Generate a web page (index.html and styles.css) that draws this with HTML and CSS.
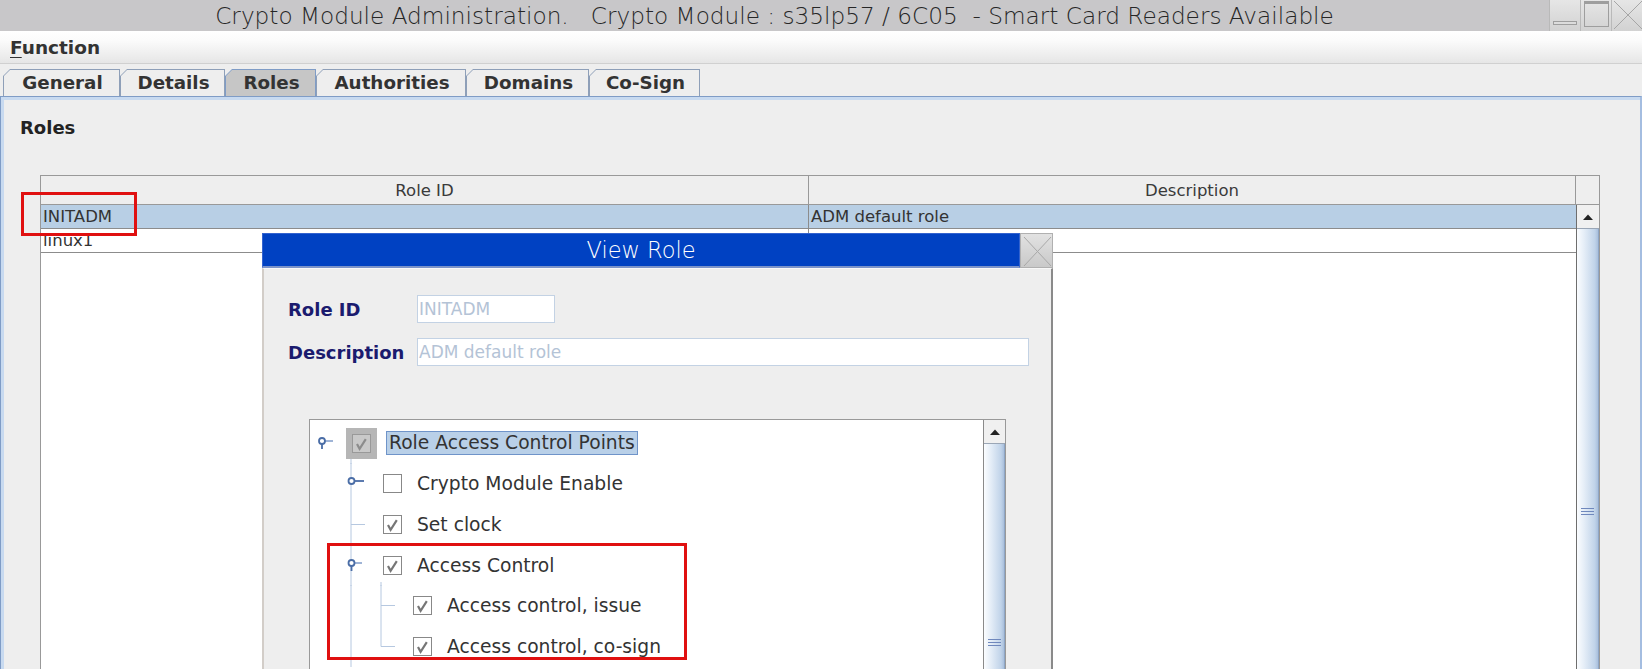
FILE: index.html
```html
<!DOCTYPE html>
<html>
<head>
<meta charset="utf-8">
<link rel="stylesheet" href="styles.css">
</head>
<body>
<div class="titlebar">
  <div class="title">Crypto Module Administration.   Crypto Module : s35lp57 / 6C05  - Smart Card Readers Available</div>
  <div class="wbtns">
    <span class="wbtn"><svg width="31" height="31"><rect x="3.5" y="21.5" width="23" height="3" fill="#dcdcdc" stroke="#9e9e9e"/></svg></span>
    <span class="wbtn"><svg width="31" height="31"><rect x="3.5" y="1.5" width="24" height="25" fill="none" stroke="#9e9e9e"/><line x1="3.5" y1="3" x2="27.5" y2="3" stroke="#9e9e9e" stroke-width="2"/></svg></span>
    <span class="wbtn"><svg width="31" height="31"><line x1="2" y1="1" x2="30" y2="29" stroke="#a6a6a6"/><line x1="30" y1="1" x2="2" y2="29" stroke="#a6a6a6"/></svg></span>
  </div>
</div>
<div class="menubar"><span class="menu"><span class="mn">F</span>unction</span></div>
<div class="tabrow">
  <div class="tab t-general"><span class="tab-in">General</span></div>
  <div class="tab t-details"><span class="tab-in">Details</span></div>
  <div class="tab t-roles sel"><span class="tab-in">Roles</span></div>
  <div class="tab t-auth"><span class="tab-in">Authorities</span></div>
  <div class="tab t-domains"><span class="tab-in">Domains</span></div>
  <div class="tab t-cosign"><span class="tab-in">Co-Sign</span></div>
</div>
<div class="panel">
  <div class="section-title">Roles</div>
  <div class="table">
    <div class="thead">
      <div class="th c1">Role ID</div>
      <div class="th c2">Description</div>
      <div class="th corner"></div>
    </div>
    <div class="tbody">
      <div class="rows">
        <div class="tr sel"><div class="td c1">INITADM</div><div class="td c2">ADM default role</div></div>
        <div class="tr"><div class="td c1">linux1</div><div class="td c2"></div></div>
      </div>
      <div class="vscroll">
        <div class="sbtn"><svg width="12" height="8"><path d="M1 7 L6 1.5 L11 7 Z" fill="#222"/></svg></div>
        <div class="thumb big"><svg width="13" height="7"><line x1="0" y1="0.5" x2="13" y2="0.5" stroke="#6f88bd"/><line x1="0" y1="3.5" x2="13" y2="3.5" stroke="#6f88bd"/><line x1="0" y1="6.5" x2="13" y2="6.5" stroke="#6f88bd"/></svg></div>
      </div>
    </div>
  </div>
</div>

<div class="dialog">
  <div class="dtitle">
    <div class="dtitle-text">View Role</div>
    <div class="dclose"><svg width="33" height="35"><line x1="3" y1="3" x2="30" y2="32" stroke="#a8a8a8"/><line x1="30" y1="3" x2="3" y2="32" stroke="#a8a8a8"/></svg></div>
  </div>
  <div class="dbody">
    <div class="form">
      <div class="flabel">Role ID</div>
      <div class="field f1">INITADM</div>
      <div class="flabel">Description</div>
      <div class="field f2">ADM default role</div>
    </div>
    <div class="tree">
      <div class="tree-rows">
        <div class="trow">
          <svg class="guide" width="36" height="41"><line x1="41" y1="36" x2="41" y2="41" stroke="#b6c8e0"/><line x1="15" y1="18" x2="23" y2="18" stroke="#7f9bc8" stroke-width="1.5"/><line x1="12" y1="21" x2="12" y2="26" stroke="#4a6da6" stroke-width="1.8"/><circle cx="12" cy="18" r="3" fill="#fff" stroke="#4a6da6" stroke-width="1.8"/></svg>
          <div class="grayck"><svg width="19" height="19"><rect x="0.5" y="0.5" width="18" height="18" fill="#c9c9c9" stroke="#999"/><path d="M5 10 L7.6 14.8 L13.8 5.2" fill="none" stroke="#8c8c8c" stroke-width="2.2"/></svg></div>
          <span class="tlabel root">Role Access Control Points</span>
        </div>
        <div class="trow">
          <svg class="guide" width="73" height="41"><line x1="41" y1="0" x2="41" y2="41" stroke="#b6c8e0"/><line x1="44" y1="18" x2="54" y2="18" stroke="#4a6da6" stroke-width="1.8"/><circle cx="41.5" cy="18" r="3" fill="#fff" stroke="#4a6da6" stroke-width="1.8"/></svg>
          <svg class="ck" width="19" height="19"><rect x="0.5" y="0.5" width="18" height="18" fill="#fff" stroke="#888"/></svg>
          <span class="tlabel">Crypto Module Enable</span>
        </div>
        <div class="trow">
          <svg class="guide" width="73" height="41"><line x1="41" y1="0" x2="41" y2="41" stroke="#b6c8e0"/><line x1="41" y1="20.5" x2="55" y2="20.5" stroke="#b6c8e0"/></svg>
          <svg class="ck" width="19" height="19"><rect x="0.5" y="0.5" width="18" height="18" fill="#fff" stroke="#888"/><path d="M5 10 L7.6 14.8 L13.8 5.2" fill="none" stroke="#767676" stroke-width="2.2"/></svg>
          <span class="tlabel">Set clock</span>
        </div>
        <div class="trow">
          <svg class="guide" width="73" height="41"><line x1="41" y1="0" x2="41" y2="41" stroke="#b6c8e0"/><line x1="71" y1="37" x2="71" y2="41" stroke="#b6c8e0"/><line x1="44" y1="18" x2="52" y2="18" stroke="#7f9bc8" stroke-width="1.5"/><line x1="41.5" y1="21" x2="41.5" y2="26" stroke="#4a6da6" stroke-width="1.8"/><circle cx="41.5" cy="18" r="3" fill="#fff" stroke="#4a6da6" stroke-width="1.8"/></svg>
          <svg class="ck" width="19" height="19"><rect x="0.5" y="0.5" width="18" height="18" fill="#fff" stroke="#888"/><path d="M5 10 L7.6 14.8 L13.8 5.2" fill="none" stroke="#767676" stroke-width="2.2"/></svg>
          <span class="tlabel">Access Control</span>
        </div>
        <div class="trow">
          <svg class="guide" width="103" height="41"><line x1="41" y1="0" x2="41" y2="41" stroke="#b6c8e0"/><line x1="71" y1="0" x2="71" y2="41" stroke="#b6c8e0"/><line x1="71" y1="20.5" x2="85" y2="20.5" stroke="#b6c8e0"/></svg>
          <svg class="ck" width="19" height="19"><rect x="0.5" y="0.5" width="18" height="18" fill="#fff" stroke="#888"/><path d="M5 10 L7.6 14.8 L13.8 5.2" fill="none" stroke="#767676" stroke-width="2.2"/></svg>
          <span class="tlabel">Access control, issue</span>
        </div>
        <div class="trow">
          <svg class="guide" width="103" height="41"><line x1="41" y1="0" x2="41" y2="41" stroke="#b6c8e0"/><line x1="71" y1="0" x2="71" y2="20.5" stroke="#b6c8e0"/><line x1="71" y1="20.5" x2="85" y2="20.5" stroke="#b6c8e0"/></svg>
          <svg class="ck" width="19" height="19"><rect x="0.5" y="0.5" width="18" height="18" fill="#fff" stroke="#888"/><path d="M5 10 L7.6 14.8 L13.8 5.2" fill="none" stroke="#767676" stroke-width="2.2"/></svg>
          <span class="tlabel">Access control, co-sign</span>
        </div>
      </div>
      <div class="vscroll small">
        <div class="sbtn"><svg width="12" height="8"><path d="M1 7 L6 1.5 L11 7 Z" fill="#222"/></svg></div>
        <div class="thumb tree-thumb"><svg width="13" height="7"><line x1="0" y1="0.5" x2="13" y2="0.5" stroke="#6f88bd"/><line x1="0" y1="3.5" x2="13" y2="3.5" stroke="#6f88bd"/><line x1="0" y1="6.5" x2="13" y2="6.5" stroke="#6f88bd"/></svg></div>
      </div>
    </div>
  </div>
</div>

<div class="redbox r1"></div>
<div class="redbox r2"></div>
</body>
</html>
```

FILE: styles.css
```css
* { box-sizing: border-box; }
html, body { margin: 0; padding: 0; }
body {
  width: 1642px;
  height: 669px;
  overflow: hidden;
  position: relative;
  background: #eeeeee;
  font-family: "DejaVu Sans", "Liberation Sans", sans-serif;
  color: #333333;
  display: flex;
  flex-direction: column;
}

/* window title bar */
.titlebar {
  height: 31px;
  flex: none;
  display: flex;
  align-items: center;
  background: #c8c7c9;
}
.title {
  flex: 1;
  text-align: center;
  white-space: pre;
  font-size: 23.2px;
  font-weight: 200;
  color: #262626;
  line-height: 31px;
}
.wbtns { display: flex; height: 31px; }
.wbtn {
  width: 31px;
  height: 31px;
  display: block;
  background: linear-gradient(#e6e6e6, #d2d2d2);
  border-left: 1px solid #b9b9b9;
}
.wbtn svg { display: block; }

/* menu bar */
.menubar {
  height: 33px;
  flex: none;
  background: linear-gradient(#ffffff, #fbfbfb 30%, #e6e6e6);
  border-bottom: 1px solid #d0d0d0;
  display: flex;
  align-items: center;
  padding-left: 10px;
}
.menu { font-size: 18.5px; font-weight: bold; color: #333; }
.mn { text-decoration: underline; text-underline-offset: 3px; text-decoration-thickness: 1px; }

/* tabs */
.tabrow {
  height: 32px;
  flex: none;
  display: flex;
  align-items: flex-end;
  padding-left: 3px;
}
.tab {
  height: 27px;
  padding: 1px 1px 0 1px;
  background: #8e9fb8;
  clip-path: polygon(7px 0, 100% 0, 100% 100%, 0 100%, 0 7px);
}
.t-general { width: 117px; }
.t-details { width: 105px; }
.t-roles { width: 91px; }
.t-auth { width: 150px; }
.t-domains { width: 123px; }
.t-cosign { width: 111px; }
.tab-in {
  display: block;
  height: 100%;
  padding-left: 2px;
  text-align: center;
  background: #eeeeee;
  clip-path: polygon(6px 0, 100% 0, 100% 100%, 0 100%, 0 6px);
  font-size: 18.3px;
  font-weight: bold;
  line-height: 25px;
  color: #333;
  white-space: nowrap;
}
.tab.sel { background: #7f9cc6; }
.tab.sel .tab-in { background: #c6c6c6; }

/* main panel */
.panel {
  flex: 1;
  min-height: 0;
  border-top: 1px solid #7f9cc6;
  border-left: 1px solid #7f9cc6;
  border-right: 2px solid #a4bde0;
  box-shadow: inset 3px 3px 0 #c8daf0;
  padding: 19px 0 0 19px;
  background: #eeeeee;
  overflow: hidden;
}
.section-title {
  font-size: 18px;
  font-weight: bold;
  line-height: 24px;
  color: #222;
}
.table {
  margin: 35px 0 0 20px;
  width: 1560px;
  height: 494px;
  border: 1px solid #999;
  border-bottom: none;
  background: #ffffff;
  display: flex;
  flex-direction: column;
  overflow: hidden;
}
.thead {
  height: 29px;
  flex: none;
  display: flex;
  background: #eeeeee;
  border-bottom: 1px solid #999;
}
.th {
  display: flex;
  align-items: center;
  justify-content: center;
  font-size: 16.5px;
  color: #3a3a3a;
  border-right: 1px solid #999;
}
.th.c1 { width: 768px; }
.th.c2 { width: 767px; }
.th.corner { flex: 1; border-right: none; }
.tbody { flex: 1; min-height: 0; display: flex; }
.rows { flex: 1; }
.tr { display: flex; height: 24px; border-bottom: 1px solid #8c8c8c; }
.tr.sel { background: #b8cfe5; }
.td { font-size: 16.5px; line-height: 23px; color: #333; padding-left: 2px; white-space: nowrap; }
.td.c1 { width: 768px; border-right: 1px solid #8c8c8c; }
.td.c2 { flex: 1; }

/* scrollbars */
.vscroll {
  width: 23px;
  flex: none;
  border-left: 1px solid #6e6e6e;
  background: #eeeeee;
  display: flex;
  flex-direction: column;
  overflow: hidden;
}
.sbtn {
  height: 24px;
  flex: none;
  display: flex;
  align-items: center;
  justify-content: center;
  background: #f0f0f0;
  border-bottom: 1px solid #9aa6b6;
}
.sbtn svg { display: block; }
.thumb {
  flex: none;
  display: flex;
  align-items: center;
  justify-content: center;
  background: linear-gradient(to right, #fbfdff, #e4edf7 35%, #c0d3e9 85%, #a9bfdc);
  border-right: 1px solid #8ea6c6;
}
.thumb svg { display: block; }
.thumb.big { height: 564px; }
.thumb.tree-thumb { height: 396px; }
.vscroll.small { width: 22px; border-left: 1px solid #8a8a8a; }

/* dialog */
.dialog {
  position: absolute;
  left: 262px;
  top: 233px;
  width: 791px;
  height: 436px;
  display: flex;
  flex-direction: column;
  overflow: hidden;
}
.dtitle { height: 35px; flex: none; display: flex; }
.dtitle-text {
  flex: 1;
  background: #0041c2;
  border: 1px solid #3363cf;
  border-bottom: 2px solid #7b93c9;
  color: #ffffff;
  font-size: 22.5px;
  font-weight: 200;
  display: flex;
  align-items: center;
  justify-content: center;
}
.dclose {
  width: 33px;
  background: linear-gradient(#e2e2e2, #c9c9c9);
  border: 1px solid #b0b0b0;
}
.dclose svg { display: block; }
.dbody {
  flex: 1;
  min-height: 0;
  background: #eeeeee;
  border-left: 2px solid #d2cdc8;
  border-right: 2px solid #8a8a8a;
  border-top: 1px solid #f8f8f8;
  padding: 26px 0 0 24px;
  overflow: hidden;
}
.form {
  display: grid;
  grid-template-columns: 129px auto;
  row-gap: 15px;
  align-items: center;
  justify-items: start;
}
.flabel { font-size: 18px; font-weight: bold; color: #1b1b6e; }
.field {
  height: 28px;
  background: #ffffff;
  border: 1px solid #c3d2e4;
  font-size: 17px;
  color: #b4c3d6;
  line-height: 26px;
  padding-left: 1px;
  white-space: nowrap;
}
.field.f1 { width: 138px; }
.field.f2 { width: 612px; }

/* tree */
.tree {
  margin: 53px 0 0 21px;
  width: 697px;
  height: 300px;
  border-top: 1px solid #999;
  border-left: 1px solid #999;
  border-right: 1px solid #999;
  background: #ffffff;
  display: flex;
  overflow: hidden;
}
.tree-rows { flex: 1; padding-top: 3px; }
.trow { display: flex; align-items: center; height: 40.6px; }
.guide { flex: none; overflow: visible; display: block; }
.ck { flex: none; display: block; }
.grayck {
  width: 31px;
  height: 31px;
  flex: none;
  background: #b6b6b6;
  display: flex;
  align-items: center;
  justify-content: center;
}
.grayck svg { display: block; }
.tlabel {
  margin-left: 15px;
  font-size: 18.7px;
  color: #333;
  white-space: nowrap;
}
.tlabel.root {
  margin-left: 9px;
  height: 24px;
  line-height: 22px;
  padding: 0 2px;
  background: #b9d0e8;
  border: 1px solid #6f94c9;
}

/* annotation boxes */
.redbox {
  position: absolute;
  border: 3px solid #e01010;
}
.r1 { left: 21px; top: 192px; width: 116px; height: 44px; }
.r2 { left: 327px; top: 543px; width: 360px; height: 117px; }
```
